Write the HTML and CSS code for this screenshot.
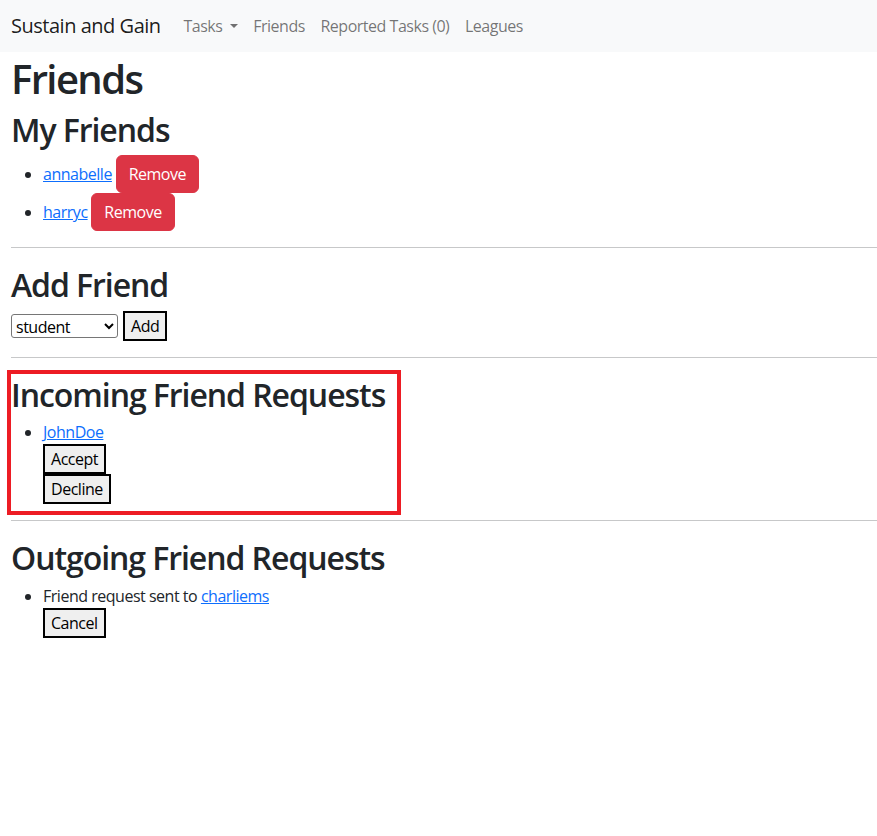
FILE: index.html
```html
<!DOCTYPE html>
<html lang="en">
<head>
<meta charset="utf-8">
<title>Friends</title>
<link rel="stylesheet" href="styles.css">
</head>
<body>
<nav class="navbar">
  <a class="brand" href="#">Sustain and Gain</a>
  <ul class="nav">
    <li><a class="nav-link dropdown" href="#">Tasks</a></li>
    <li><a class="nav-link" href="#">Friends</a></li>
    <li><a class="nav-link" href="#">Reported Tasks (0)</a></li>
    <li><a class="nav-link" href="#">Leagues</a></li>
  </ul>
</nav>
<main class="container">
  <h1>Friends</h1>
  <h2>My Friends</h2>
  <ul class="list">
    <li><a href="#">annabelle</a> <button class="btn-danger">Remove</button></li>
    <li><a href="#">harryc</a> <button class="btn-danger">Remove</button></li>
  </ul>
  <hr>
  <h2>Add Friend</h2>
  <form class="add-form">
    <select class="select">
      <option>student</option>
    </select>
    <button type="button" class="btn-plain">Add</button>
  </form>
  <hr>
  <section class="highlight">
    <h2>Incoming Friend Requests</h2>
    <ul class="list">
      <li>
        <a href="#">JohnDoe</a>
        <form class="block-form"><button type="button" class="btn-plain">Accept</button></form>
        <form class="block-form"><button type="button" class="btn-plain">Decline</button></form>
      </li>
    </ul>
    <div class="annotation"></div>
  </section>
  <hr>
  <h2>Outgoing Friend Requests</h2>
  <ul class="list">
    <li>
      Friend request sent to <a href="#">charliems</a>
      <form class="block-form"><button type="button" class="btn-plain">Cancel</button></form>
    </li>
  </ul>
</main>
</body>
</html>
```

FILE: styles.css
```css
* { box-sizing: border-box; }

body {
  margin: 0;
  font-family: "Open Sans", "Noto Sans", sans-serif;
  font-size: 16px;
  line-height: 24px;
  letter-spacing: -0.03em;
  color: #212529;
  background: #fff;
}

a { color: #0d6efd; text-decoration: underline; }

.navbar {
  display: flex;
  align-items: center;
  height: 52px;
  padding: 0 11px;
  background: #f8f9fa;
}

.brand {
  font-size: 20px;
  line-height: 30px;
  color: rgba(0, 0, 0, 0.9);
  text-decoration: none;
  margin-right: 15px;
}

.nav {
  display: flex;
  list-style: none;
  margin: 0;
  padding: 0;
}

.nav-link {
  display: block;
  padding: 8px 7.8px;
  color: rgba(0, 0, 0, 0.55);
  text-decoration: none;
}

.dropdown::after {
  content: "";
  display: inline-block;
  margin-left: 0.45em;
  vertical-align: 0.255em;
  border-top: 0.3em solid;
  border-right: 0.3em solid transparent;
  border-left: 0.3em solid transparent;
}

.container {
  padding: 0 0 0 11px;
}

h1, h2 {
  margin: 0 0 8px;
  font-weight: 560;
  line-height: 1.2;
  letter-spacing: -0.033em;
}

h1 { font-size: 40px; height: 49px; padding-top: 3px; letter-spacing: -0.04em; }
h2 { font-size: 32px; height: 38.4px; padding-top: 2px; }

.list {
  margin: 0 0 16px;
  padding-left: 32px;
}

hr {
  margin: 16px 0;
  border: 0;
  border-top: 1px solid rgba(33, 37, 41, 0.25);
}

button {
  font-family: inherit;
  font-size: inherit;
  line-height: inherit;
  letter-spacing: inherit;
  margin: 0;
}

.btn-danger {
  display: inline-block;
  padding: 6px 12px;
  border: 1px solid #dc3545;
  border-radius: 6px;
  background: #dc3545;
  color: #fff;
  cursor: pointer;
}

.btn-plain {
  padding: 1px 6px;
  border: 2px solid #000;
  border-radius: 0;
  background: #efefef;
  color: #000;
}

.add-form {
  display: flex;
  align-items: center;
  gap: 5px;
  margin: 0;
}

.select {
  font-family: inherit;
  font-size: 16px;
  letter-spacing: inherit;
  width: 107px;
  height: 24px;
  margin: 0;
  border: 1px solid #767676;
  border-radius: 3px;
  background: #fff;
  color: #000;
}

.block-form { margin: 0; }

.highlight { position: relative; }

.annotation {
  position: absolute;
  top: -4px;
  left: -4px;
  width: 394px;
  height: 145px;
  border: 4px solid #ed1c24;
  pointer-events: none;
}
```
